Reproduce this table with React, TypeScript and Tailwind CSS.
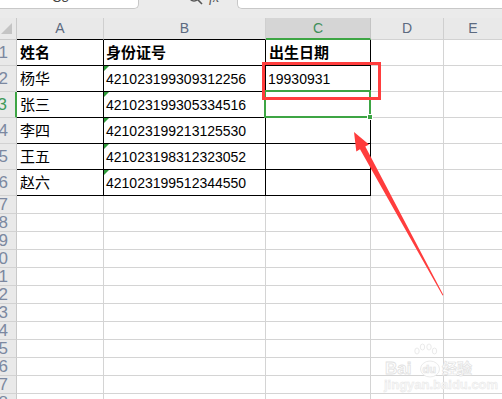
import React from "react";

const rows: [string, string, string][] = [
  ["姓名", "身份证号", "出生日期"],
  ["杨华", "421023199309312256", "19930931"],
  ["张三", "421023199305334516", ""],
  ["李四", "421023199213125530", ""],
  ["王五", "421023198312323052", ""],
  ["赵六", "421023199512344550", ""],
];

const cjk = "font-['Noto_Sans_CJK_SC','Noto_Sans',sans-serif]";
const num = "font-['Liberation_Sans',Arial,sans-serif]";
const hdrFont = "font-['Liberation_Sans',Arial,sans-serif]";

function RowHead({ n, h, active }: { n: number; h: string; active?: boolean }) {
  return (
    <div
      className={`${h} flex items-center justify-end overflow-hidden bg-[#e9e9e9] border-b border-[#d2d2d2] pr-[8px] ${hdrFont} text-[17px] whitespace-nowrap ${
        active ? "border-r-2 border-r-[#3da544] text-[#3f9a5a]" : "border-r border-r-[#c9c9c9] text-[#7b88a0]"
      }`}
    >
      {n}
    </div>
  );
}

function Triangle() {
  return (
    <div className="absolute left-0 top-0 w-0 h-0 border-t-[5px] border-t-[#2e9b3a] border-r-[5px] border-r-transparent" />
  );
}

export default function App() {
  const extraRows = Array.from({ length: 13 }, (_, i) => i + 7);
  return (
    <div className="relative w-[502px] h-[399px] overflow-hidden bg-white">
      {/* toolbar */}
      <div className="h-[18px] bg-[#ebebeb]">
        <div className="flex h-[9px] overflow-hidden">
          <div className="w-[139px] h-[9px] bg-white border-r border-b border-[#c8c8c8] rounded-br-[5px] overflow-hidden">
            <div className={`-mt-[9px] pl-[52px] leading-[13px] text-[13px] text-[#444] ${hdrFont}`}>C3</div>
          </div>
          <div className="w-[98px] h-[9px] flex overflow-hidden">
            <svg width="16" height="16" viewBox="0 0 16 16" className="ml-[48px] -mt-[11px] shrink-0">
              <circle cx="7" cy="7" r="5" fill="none" stroke="#555" strokeWidth="1.4" />
              <line x1="10.5" y1="10.5" x2="15" y2="15" stroke="#555" strokeWidth="1.6" />
            </svg>
            <div className="ml-[6px] -mt-[9px] leading-[14px] text-[14px] italic text-[#555] font-['Liberation_Serif',serif]">fx</div>
          </div>
          <div className="flex-1 h-[9px] bg-white border-l border-b border-[#c8c8c8] rounded-bl-[5px]" />
        </div>
      </div>

      {/* sheet */}
      <div className="grid grid-cols-[17px_87px_162px_105px_73px_1fr]">
        {/* header row */}
        <div className="relative h-[22px] bg-[#e9e9e9] border-r border-b border-[#c9c9c9]">
          <div className="absolute left-[1px] top-[5px] w-0 h-0 border-b-[11px] border-b-[#c4c4c4] border-l-[11px] border-l-transparent" />
        </div>
        <div className={`h-[22px] flex items-center justify-center bg-[#e9e9e9] border-r border-r-[#cfcfcf] border-b border-b-black ${hdrFont} text-[14px] text-[#5c6a80]`}>A</div>
        <div className={`h-[22px] flex items-center justify-center bg-[#e9e9e9] border-r border-r-[#cfcfcf] border-b border-b-black ${hdrFont} text-[14px] text-[#5c6a80]`}>B</div>
        <div className={`h-[22px] flex items-center justify-center bg-[#d5d5d5] border-r border-r-[#c4c4c4] border-b-2 border-b-[#3da544] ${hdrFont} text-[14px] text-[#3f8f5a]`}>C</div>
        <div className={`h-[22px] flex items-center justify-center bg-[#e9e9e9] border-r border-r-[#cfcfcf] border-b border-b-[#d2d2d2] ${hdrFont} text-[14px] text-[#5c6a80]`}>D</div>
        <div className={`h-[22px] flex items-center justify-center bg-[#e9e9e9] border-b border-b-[#d2d2d2] ${hdrFont} text-[14px] text-[#5c6a80]`}>E</div>

        {rows.map((r, i) => {
          const n = i + 1;
          const bold = i === 0;
          return (
            <React.Fragment key={n}>
              <RowHead n={n} h="h-[26px]" active={n === 3} />
              <div
                className={`h-[26px] flex items-center pl-[3px] border-r border-b border-black ${cjk} text-[15px] text-black ${
                  bold ? "font-bold" : ""
                }`}
              >
                {r[0]}
              </div>
              <div
                className={`relative h-[26px] flex items-center pl-[2px] border-r border-b border-black text-black whitespace-nowrap ${
                  bold ? `${cjk} text-[15px] font-bold` : `${num} text-[14px] pt-[2px]`
                }`}
              >
                {!bold && <Triangle />}
                {r[1]}
              </div>
              <div
                className={`relative h-[26px] flex items-center pl-[2px] border-r border-b border-black text-black whitespace-nowrap ${
                  bold ? `${cjk} text-[15px] font-bold pl-[3px]` : `${num} text-[14px] pt-[2px]`
                }`}
              >
                {r[2]}
                {n === 3 && (
                  <div className="absolute -left-[2px] -top-[2px] w-[107px] h-[28px] border-[2.5px] border-[#3da544] z-10">
                    <div className="absolute -right-[4px] -bottom-[4px] w-[6px] h-[6px] bg-[#3da544] border border-white" />
                  </div>
                )}
              </div>
              <div className="h-[26px] border-r border-b border-[#d4d4d4]" />
              <div className="h-[26px] border-b border-[#d4d4d4]" />
            </React.Fragment>
          );
        })}

        {extraRows.map((n) => (
          <React.Fragment key={n}>
            <RowHead n={n} h="h-[18px]" />
            <div className="h-[18px] border-r border-b border-[#d4d4d4]" />
            <div className="h-[18px] border-r border-b border-[#d4d4d4]" />
            <div className="h-[18px] border-r border-b border-[#d4d4d4]" />
            <div className="h-[18px] border-r border-b border-[#d4d4d4]" />
            <div className="h-[18px] border-b border-[#d4d4d4]" />
          </React.Fragment>
        ))}
      </div>

      {/* red annotation rectangle */}
      <div className="absolute left-[262px] top-[62px] w-[119px] h-[38px] border-[3.5px] border-[#ff3d3d] z-20" />

      {/* red arrow */}
      <svg className="absolute left-0 top-0 z-20" width="502" height="399" viewBox="0 0 502 399">
        <polygon
          points="354,132 369,144.5 365.3,146.6 443.4,295 442.6,295.4 360,149.3 356.3,151.5"
          fill="#ff3d3d"
        />
      </svg>

      {/* watermark */}
      <div className="absolute left-[384px] top-[343px] z-20 w-[92px] select-none">
        <svg width="92" height="36" viewBox="0 0 92 36" className="block">
          <g fill="#fefefe" stroke="#e4e4e4" strokeWidth="0.8">
            <ellipse cx="33" cy="8" rx="2.2" ry="3" />
            <ellipse cx="38.5" cy="4" rx="2.2" ry="3" />
            <ellipse cx="45" cy="4" rx="2.2" ry="3" />
            <ellipse cx="50.5" cy="8" rx="2.2" ry="3" />
            <ellipse cx="46" cy="26" rx="9.5" ry="8" />
          </g>
          <text x="1" y="31" fontFamily="Liberation Sans, Arial, sans-serif" fontWeight="bold" fontSize="17" fill="#fefefe" stroke="#e2e2e2" strokeWidth="0.8">Bai</text>
          <text x="38.5" y="30" fontFamily="Liberation Sans, Arial, sans-serif" fontWeight="bold" fontSize="11" fill="#fefefe" stroke="#e2e2e2" strokeWidth="0.7">du</text>
          <text x="58" y="31" fontFamily="Noto Sans CJK SC, sans-serif" fontWeight="bold" fontSize="15" fill="#fefefe" stroke="#e2e2e2" strokeWidth="0.7">经验</text>
        </svg>
        <div className={`-mt-[1px] ${hdrFont} text-[13px] leading-[14px] font-bold text-[#f8f8f8] [-webkit-text-stroke:0.4px_#e6e6e6] whitespace-nowrap`}>
          jingyan.baidu.com
        </div>
      </div>
    </div>
  );
}
